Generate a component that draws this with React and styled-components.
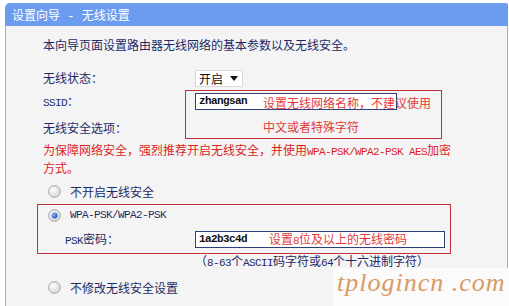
import React from 'react';
import styled, { createGlobalStyle } from 'styled-components';

const GlobalStyle = createGlobalStyle`
  html, body { margin: 0; padding: 0; background: #fff; }
  body {
    width: 509px; height: 306px; overflow: hidden;
    font-family: "Noto Sans CJK SC", "Liberation Sans", sans-serif;
    font-size: 12px;
  }
`;

const Page = styled.div`
  position: relative;
  width: 509px;
  height: 306px;
  padding-top: 3px;
  box-sizing: border-box;
`;

const Panel = styled.div`
  margin-left: 5px;
  width: 503px;
  height: 303px;
  display: flex;
  flex-direction: column;
`;

const Header = styled.div`
  height: 23px;
  line-height: 23px;
  background: #6c9cf0;
  border-radius: 5px 2px 0 0;
  color: #fff;
  padding-left: 7px;
  font-size: 12px;
`;

const Body = styled.div`
  flex: 1;
  background: #f4f4f4;
  border-left: 1px solid #e3a35c;
  border-right: 1px solid #e3a35c;
  padding: 10px 0 0 31px;
  color: #1e2a66;
`;

const Mono = styled.span`
  font-family: "Liberation Mono", monospace;
  font-size: ${p => p.$size || 11}px;
  letter-spacing: ${p => (p.$size ? 0 : -0.6)}px;
  line-height: 1;
  font-weight: ${p => (p.$bold ? 700 : 400)};
`;

const Intro = styled.div`
  padding-left: 6px;
  height: 18px;
  line-height: 18px;
`;

const FieldRow = styled.div`
  display: grid;
  grid-template-columns: ${p => p.$label || 152}px auto;
  align-items: center;
  height: 20px;
  padding-left: ${p => p.$indent || 6}px;
  margin-top: ${p => p.$mt || 0}px;
`;

const Label = styled.div`
  line-height: 20px;
  white-space: nowrap;
`;

const Value = styled.div`
  position: relative;
  display: flex;
  align-items: center;
`;

const Select = styled.div`
  width: 48px;
  height: 17px;
  box-sizing: border-box;
  background: #fff;
  border: 1px solid #dadada;
  display: flex;
  align-items: center;
  justify-content: space-between;
  padding: 0 4px 0 3px;
  color: #111;
`;

const TextBox = styled.div`
  width: ${p => p.$w}px;
  height: 17px;
  box-sizing: border-box;
  background: #fff;
  border: 1px solid #2d3f7c;
  display: flex;
  align-items: center;
  padding-left: 3px;
  color: #111;
  white-space: nowrap;
`;

const Note = styled.span`
  color: #e23a3a;
  margin-left: ${p => p.$ml || 0}px;
  line-height: 18px;
`;

const Callout = styled.div`
  position: absolute;
  left: -10px;
  top: -3px;
  width: 257px;
  height: 49px;
  box-sizing: border-box;
  border: 1px solid #c0313a;
  padding: 3px 0 0 77px;
  display: flex;
  flex-direction: column;
  gap: 6px;
  pointer-events: none;
`;

const Warning = styled.div`
  margin-top: 3px;
  padding-left: 6px;
  height: 36px;
  line-height: 18px;
  color: #dc1f1f;
`;

const RadioRow = styled.div`
  display: flex;
  align-items: center;
  gap: 9px;
  height: 20px;
  padding-left: ${p => p.$indent}px;
  margin-top: ${p => p.$mt || 0}px;
`;

const Group = styled.div`
  margin-top: 3px;
  width: 414px;
  box-sizing: border-box;
  border: 1px solid #c0313a;
  padding-bottom: 4px;
`;

const Hint = styled.div`
  padding-left: 158px;
  height: 14px;
  line-height: 14px;
  white-space: nowrap;
`;

const Watermark = styled.div`
  position: absolute;
  right: 0;
  bottom: 0;
  width: 176px;
  height: 38px;
  background: #fbfbfb;
  box-sizing: border-box;
  padding: 1px 0 0 4px;
  font-family: "Liberation Serif", serif;
  font-style: italic;
  font-size: 26px;
  line-height: 28px;
  letter-spacing: 1px;
  color: #d99a62;
  white-space: pre;
`;

const Radio = ({ checked }) => (
  <svg width="13" height="13" viewBox="0 0 13 13">
    <defs>
      <radialGradient id="rbg" cx="0.35" cy="0.35" r="0.75">
        <stop offset="0" stopColor="#ffffff" />
        <stop offset="1" stopColor="#d4d4d4" />
      </radialGradient>
      <radialGradient id="rdot" cx="0.35" cy="0.35" r="0.7">
        <stop offset="0" stopColor="#8fb8ff" />
        <stop offset="1" stopColor="#1d4fb5" />
      </radialGradient>
    </defs>
    <circle cx="6.5" cy="6.5" r="5.8" fill="url(#rbg)" stroke="#a2a2a2" strokeWidth="1" />
    {checked && <circle cx="6.5" cy="6.5" r="3" fill="url(#rdot)" />}
  </svg>
);

const Arrow = () => (
  <svg width="8" height="5" viewBox="0 0 8 5">
    <path d="M0 0 H8 L4 5 Z" fill="#111" />
  </svg>
);

export default function App() {
  return (
    <>
      <GlobalStyle />
      <Page>
        <Panel>
          <Header>设置向导<Mono $size={12}> - </Mono>无线设置</Header>
          <Body>
            <Intro>本向导页面设置路由器无线网络的基本参数以及无线安全。</Intro>
            <FieldRow $mt={14}>
              <Label>无线状态：</Label>
              <Value>
                <Select>开启<Arrow /></Select>
              </Value>
            </FieldRow>
            <FieldRow $mt={3}>
              <Label><Mono>SSID</Mono>：</Label>
              <Value>
                <TextBox $w={202}><Mono $bold>zhangsan</Mono></TextBox>
                <Callout>
                  <Note>设置无线网络名称，不建议使用</Note>
                  <Note>中文或者特殊字符</Note>
                </Callout>
              </Value>
            </FieldRow>
            <FieldRow $mt={7}>
              <Label>无线安全选项：</Label>
            </FieldRow>
            <Warning>
              为保障网络安全，强烈推荐开启无线安全，并使用<Mono>WPA-PSK/WPA2-PSK AES</Mono>加密
              <br />
              方式。
            </Warning>
            <RadioRow $indent={11} $mt={4}>
              <Radio />
              <span>不开启无线安全</span>
            </RadioRow>
            <Group>
              <RadioRow $indent={10}>
                <Radio checked />
                <Mono>WPA-PSK/WPA2-PSK</Mono>
              </RadioRow>
              <FieldRow $mt={4} $indent={27} $label={130}>
                <Label><Mono>PSK</Mono>密码：</Label>
                <Value>
                  <TextBox $w={250}>
                    <Mono $bold>1a2b3c4d</Mono>
                    <Note $ml={22}>设置<Mono>8</Mono>位及以上的无线密码</Note>
                  </TextBox>
                </Value>
              </FieldRow>
            </Group>
            <Hint>（<Mono>8-63</Mono>个<Mono>ASCII</Mono>码字符或<Mono>64</Mono>个十六进制字符）</Hint>
            <RadioRow $indent={11} $mt={9}>
              <Radio />
              <span>不修改无线安全设置</span>
            </RadioRow>
          </Body>
        </Panel>
        <Watermark>{'tplogincn .com'}</Watermark>
      </Page>
    </>
  );
}
